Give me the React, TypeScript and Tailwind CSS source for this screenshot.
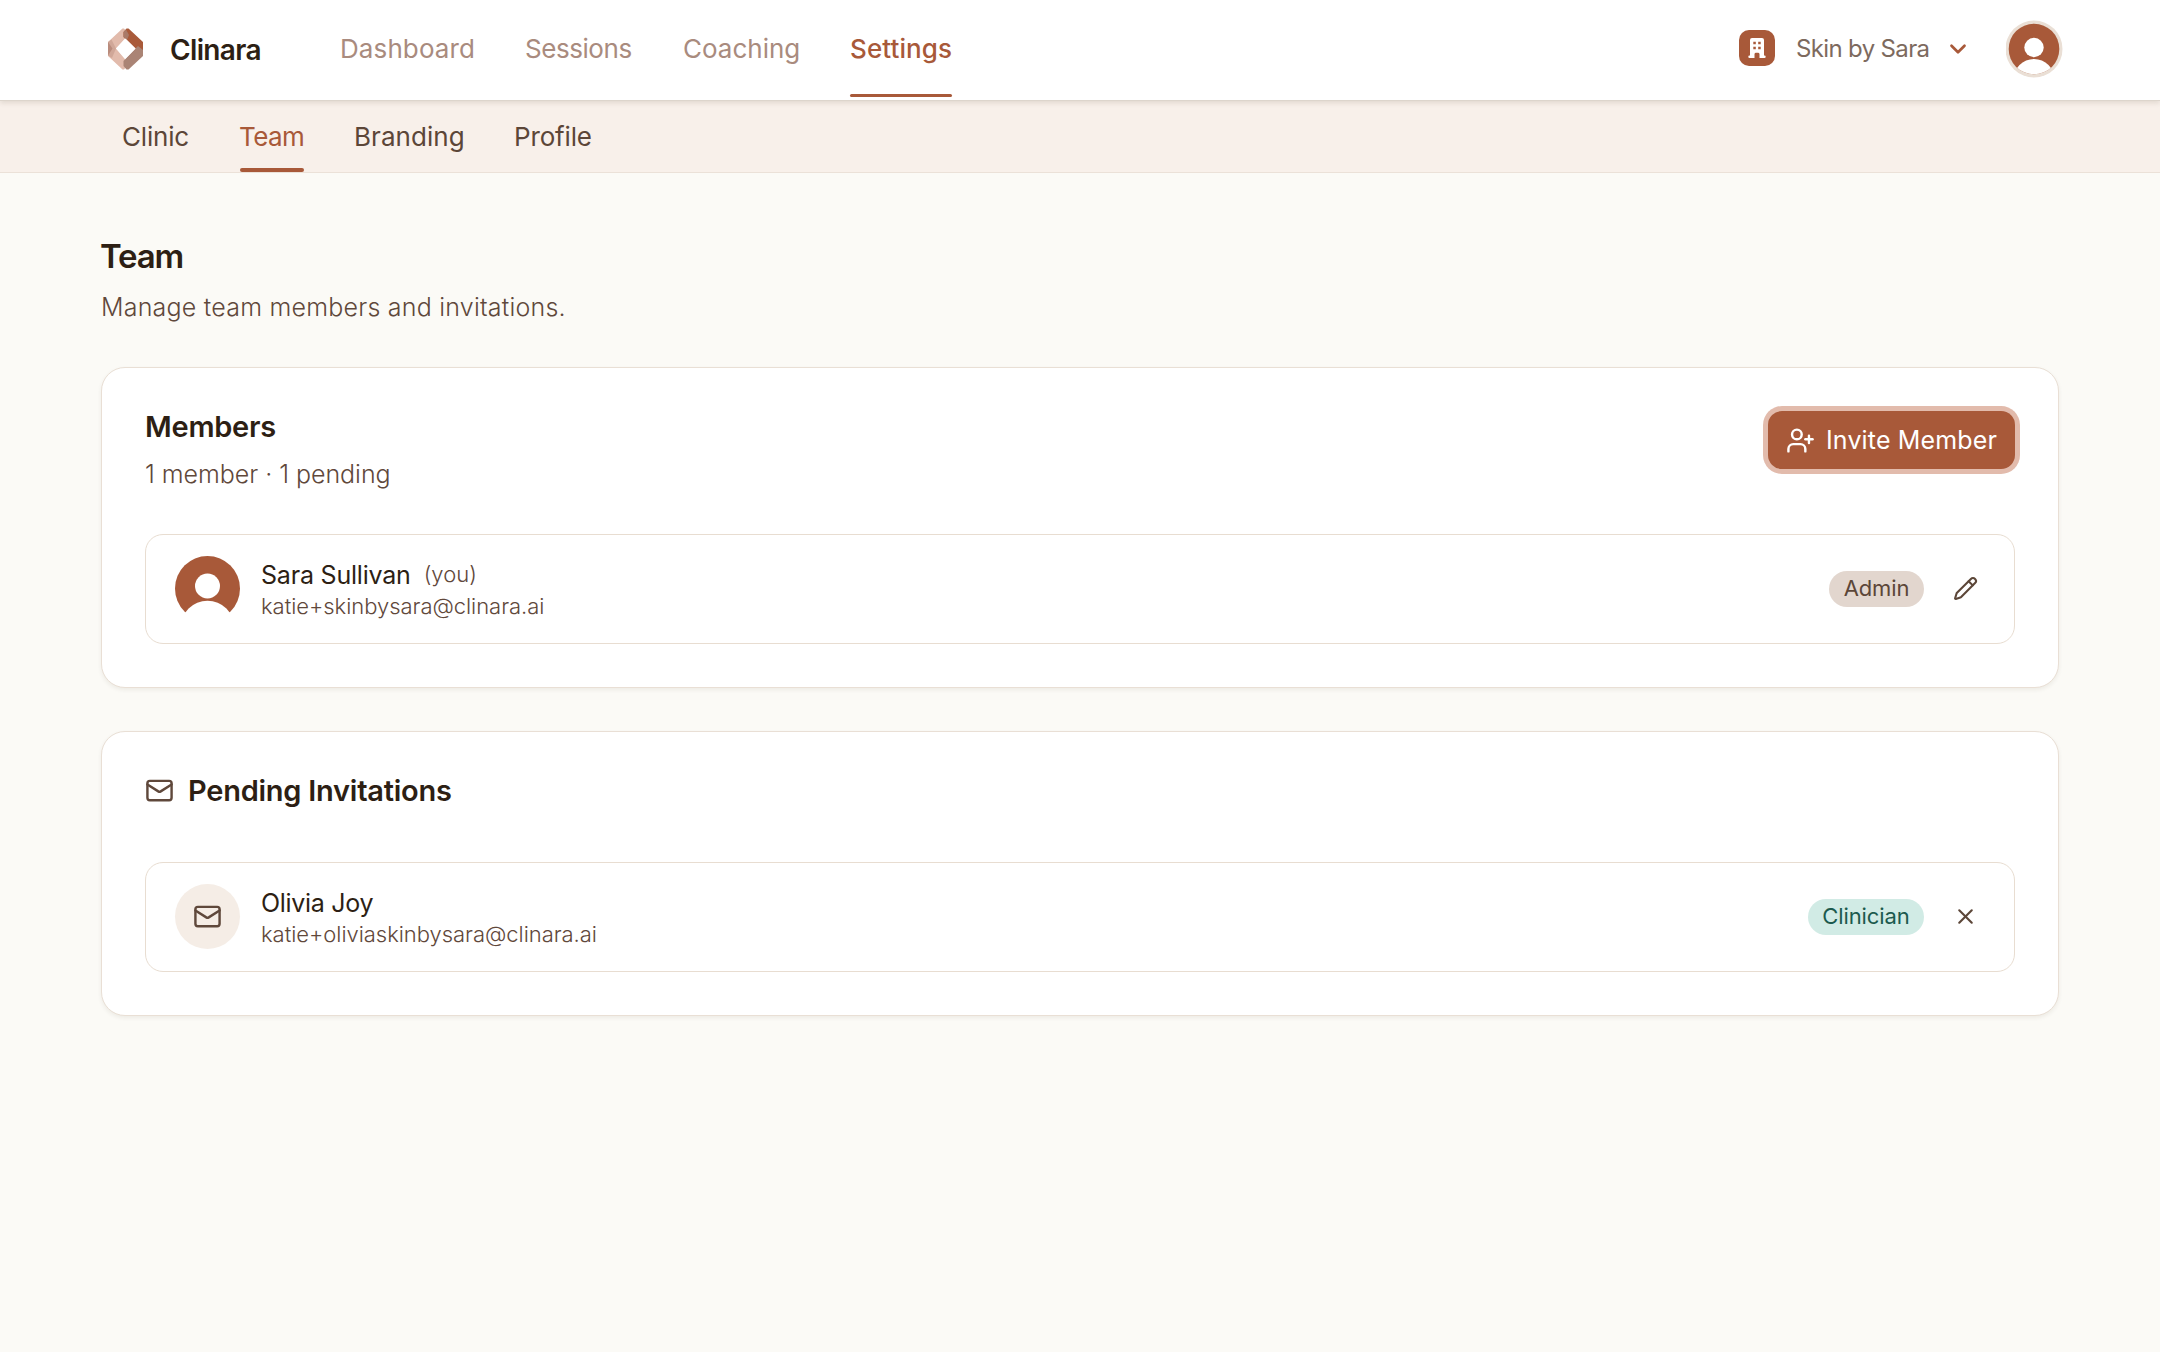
import type { ReactNode } from "react";
import { ChevronDown, Mail, Pencil, UserPlus, X } from "lucide-react";

function Logo() {
  return (
    <svg width="35" height="42" viewBox="0 0 35 42" className="shrink-0">
      <path d="M0 14 L14.5 0.5 H16 L18.5 3.5 V9 L8 20.5 L18.5 33 V38.5 L16 41.5 H14.5 L0 28Z" fill="#e2bbac" />
      <path d="M0 14 L3.5 11.5 L8 20.5 L4 30 L0 27.5Z" fill="#d0a798" />
      <path d="M0 14 L4.5 20.5 L0 27.5Z" fill="#b98b7c" />
      <path d="M15.5 4 L18.5 0.5 H20.5 L35 14 V28 L27.5 20.5 L15.5 9Z" fill="#a95a3a" />
      <path d="M15.5 4 L18 1.5 L21 7 L19 12 L15.5 9Z" fill="#a97a68" />
      <path d="M35 22 V28 L20.5 41.5 H18.5 L15.5 38 V33 L27.5 20.5 L30 18Z" fill="#aa8475" />
      <path d="M17.5 10.5 L27.5 20.5 L17.5 30.5 L8 20.5Z" fill="#ffffff" />
    </svg>
  );
}

function BuildingBadge() {
  return (
    <span className="flex size-9 shrink-0 items-center justify-center rounded-[10px] bg-[#a85939]">
      <svg width="18" height="20" viewBox="0 0 18 20">
        <path
          fillRule="evenodd"
          fill="#ffffff"
          d="M4 0H14A2 2 0 0 1 16 2V17.6H16.5A1.2 1.2 0 0 1 16.5 20H11.5V16A1.5 1.5 0 0 0 10 14.8H8A1.5 1.5 0 0 0 6.5 16V20H1.5A1.2 1.2 0 0 1 1.5 17.6H2V2A2 2 0 0 1 4 0ZM5.3 3.8V6.3H7.8V3.8ZM10.2 3.8V6.3H12.7V3.8ZM5.3 8.8V11.2H7.8V8.8ZM10.2 8.8V11.2H12.7V8.8Z"
        />
      </svg>
    </span>
  );
}

function HeaderAvatar() {
  return (
    <svg width="57" height="58" viewBox="0 0 57 58" className="shrink-0">
      <defs>
        <clipPath id="header-avatar">
          <circle cx="28" cy="29" r="25.3" />
        </clipPath>
      </defs>
      <circle cx="28" cy="29" r="28.5" fill="#eadfd5" />
      <g clipPath="url(#header-avatar)">
        <rect width="57" height="58" fill="#a85939" />
        <circle cx="28" cy="27.5" r="9.7" fill="#ffffff" />
        <circle cx="28" cy="59.5" r="20.5" fill="#ffffff" />
      </g>
    </svg>
  );
}

function MemberAvatar() {
  return (
    <svg width="65" height="65" viewBox="0 0 65 65" className="shrink-0">
      <circle cx="32.5" cy="32.5" r="32.5" fill="#a85939" />
      <circle cx="32.5" cy="30" r="12.5" fill="#ffffff" />
      <circle cx="32.5" cy="71.5" r="26.7" fill="#ffffff" />
    </svg>
  );
}

const navItems = [
  { label: "Dashboard", style: "w-[134px] tracking-[0.1px] text-[#a98b7e]" },
  { label: "Sessions", style: "w-[107px] tracking-[-0.45px] text-[#a98b7e]" },
  { label: "Coaching", style: "w-[116px] text-[#a98b7e]" },
  { label: "Settings", style: "w-[102px] tracking-[0.09px] text-[#a85939] font-medium", active: true },
];

const subItems = [
  { label: "Clinic", style: "w-[66px] tracking-[-0.2px] text-[#5c4638]" },
  { label: "Team", style: "w-[64px] tracking-[-0.59px] text-[#a85939]", active: true },
  { label: "Branding", style: "w-[109px] tracking-[0.05px] text-[#5c4638]" },
  { label: "Profile", style: "w-[77px] tracking-[-0.15px] text-[#5c4638]" },
];

function Card({ children }: { children: ReactNode }) {
  return (
    <section className="rounded-3xl border border-[#e9dfd5] bg-white px-[43px] pt-10 pb-[43px] shadow-[0_2px_4px_rgba(60,40,20,0.07)]">
      {children}
    </section>
  );
}

function PersonRow(props: { avatar: ReactNode; name: ReactNode; email: ReactNode; badge: ReactNode; action: ReactNode }) {
  return (
    <div className="flex h-[110px] items-center rounded-[18px] border border-[#e8ddd1] pr-9 pl-[29px]">
      <div className="pb-px">{props.avatar}</div>
      <div className="ml-[21px] flex flex-1 flex-col whitespace-nowrap">
        <div className="flex h-[34px] items-center pt-px text-[25px] text-[#2d1f14]">{props.name}</div>
        <div className="text-[22px] leading-7 font-light text-[#5f483b]">{props.email}</div>
      </div>
      {props.badge}
      <button className="ml-[29px] pb-px text-[#5c4638]">{props.action}</button>
    </div>
  );
}

export default function App() {
  return (
    <div className="flex min-h-screen flex-col bg-[#fbfaf6] font-['Inter',sans-serif] text-[#2d1f14]">
      <header className="relative z-10 flex h-[101px] items-center border-b border-[#ddd5cc] bg-white pr-[97px] pl-[108px] shadow-[0_2px_5px_rgba(60,40,20,0.12)]">
        <div className="pb-[3px]">
          <Logo />
        </div>
        <span className="ml-[27px] w-[92px] text-[28px] leading-9 font-semibold tracking-[-0.64px]">Clinara</span>
        <nav className="ml-[78px] flex gap-[51px] self-stretch">
          {navItems.map((item) => (
            <a key={item.label} className={`relative text-[26px] leading-[97px] whitespace-nowrap ${item.style}`}>
              {item.label}
              {item.active && <span className="absolute bottom-[3px] left-0 h-[3px] w-full rounded-sm bg-[#a85939]" />}
            </a>
          ))}
        </nav>
        <div className="ml-auto flex items-center pb-1">
          <BuildingBadge />
          <span className="mt-[2px] ml-[21px] w-[135px] text-2xl leading-9 tracking-[-0.65px] whitespace-nowrap text-[#7d6a5e]">Skin by Sara</span>
          <ChevronDown size={26} strokeWidth={2.5} className="mt-[2px] ml-[14px] text-[#a85939]" />
        </div>
        <div className="ml-[35px] pb-[3px]">
          <HeaderAvatar />
        </div>
      </header>

      <nav className="flex h-[72px] gap-[51px] border-b border-[#ebe1d8] bg-[#f8f0ea] pl-[123px]">
        {subItems.map((item) => (
          <a key={item.label} className={`relative text-[26px] leading-[71px] whitespace-nowrap ${item.style}`}>
            <span className="-ml-px">{item.label}</span>
            {item.active && <span className="absolute bottom-0 left-0 h-1 w-full rounded-sm bg-[#a85939]" />}
          </a>
        ))}
      </nav>

      <main className="pt-[63px] pr-[101px] pl-[101px]">
        <h1 className="-ml-px text-[33px] leading-10 font-semibold tracking-[-1.16px]">Team</h1>
        <p className="mt-[13px] text-[25px] leading-9 font-light tracking-[0.22px] text-[#5f483b]">Manage team members and invitations.</p>

        <div className="mt-[42px] flex flex-col gap-[43px]">
          <Card>
            <div className="flex items-start justify-between">
              <div>
                <h2 className="pt-px text-[29px] leading-9 font-semibold tracking-[-0.25px]">Members</h2>
                <p className="mt-3 text-[25px] leading-[34px] font-light tracking-[-0.04px] text-[#5f483b]">1 member · 1 pending</p>
              </div>
              <button className="mt-[3px] flex h-[58px] w-[247px] items-center rounded-[14px] bg-[#a85939] pl-[18px] text-[25px] tracking-[0.15px] whitespace-nowrap text-white ring-[5px] ring-[#e2bbac]">
                <UserPlus size={29} strokeWidth={2} />
                <span className="mt-[2px] ml-[11px]">Invite Member</span>
              </button>
            </div>
            <div className="mt-[43px]">
              <PersonRow
                avatar={<MemberAvatar />}
                name={
                  <>
                    <span className="tracking-[-0.2px]">Sara Sullivan</span>
                    <span className="mb-[2px] ml-[13px] text-[22px] font-light text-[#5f483b]">(you)</span>
                  </>
                }
                email={<span className="tracking-[-0.04px]">katie+skinbysara@clinara.ai</span>}
                badge={
                  <span className="flex h-9 w-[95px] items-center justify-center rounded-full bg-[#e2d6ce] pb-px text-[22px] tracking-[-0.15px] text-[#5c4638]">
                    Admin
                  </span>
                }
                action={<Pencil size={25} strokeWidth={2} />}
              />
            </div>
          </Card>

          <Card>
            <div className="flex items-center">
              <Mail size={29} strokeWidth={2} className="text-[#5f483b]" />
              <h2 className="ml-[14px] pt-px text-[29px] leading-9 font-semibold tracking-[-0.25px]">Pending Invitations</h2>
            </div>
            <div className="mt-[53px]">
              <PersonRow
                avatar={
                  <span className="flex size-[65px] shrink-0 items-center justify-center rounded-full bg-[#f5ede6]">
                    <Mail size={29} strokeWidth={2} className="text-[#5f483b]" />
                  </span>
                }
                name={<span className="tracking-[-0.3px]">Olivia Joy</span>}
                email={<span className="tracking-[-0.04px]">katie+oliviaskinbysara@clinara.ai</span>}
                badge={
                  <span className="flex h-9 w-[116px] items-center justify-center rounded-full bg-[#d1ebe5] pb-px text-[22px] tracking-[-0.1px] text-[#1c5a4e]">
                    Clinician
                  </span>
                }
                action={<X size={25} strokeWidth={2} />}
              />
            </div>
          </Card>
        </div>
      </main>
    </div>
  );
}
